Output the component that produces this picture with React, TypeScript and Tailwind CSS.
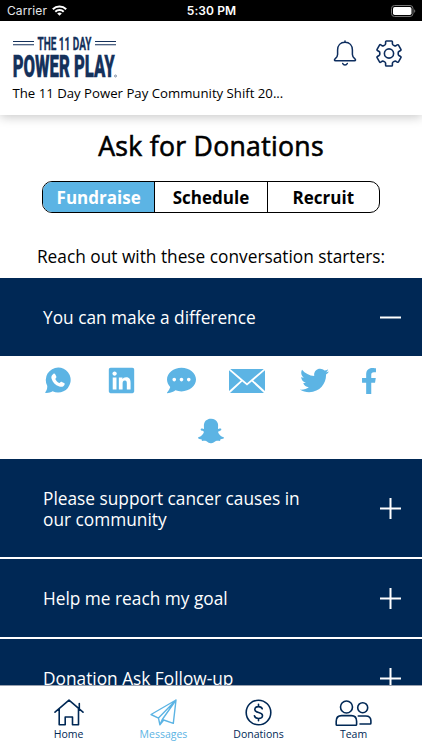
import React, { useState } from "react";
import { FaCommentDots, FaFacebookF, FaLinkedin, FaSnapchatGhost, FaTwitter } from "react-icons/fa";

const tabs = ["Fundraise", "Schedule", "Recruit"];

const starters = [
  { title: "You can make a difference", height: "h-[78px]" },
  { title: "Please support cancer causes in our community", height: "h-[98px]" },
  { title: "Help me reach my goal", height: "h-[78px]" },
  { title: "Donation Ask Follow-up", height: "h-[78px]" },
];

const StatusBar = () => (
  <div className="grid h-[21px] shrink-0 grid-cols-3 items-center bg-black pl-[7px] pr-[6px] font-['Inter',sans-serif] text-[12px] text-white">
    <div className="flex items-center gap-[5px]">
      <span className="text-[12px] leading-[20px] tracking-[0.1px] text-gray-200">Carrier</span>
      <svg width="15" height="11" viewBox="0 0 15 11" fill="none" stroke="white" strokeWidth="2">
        <path d="M.8 4.2a9.6 9.6 0 0 1 13.4 0M3.3 6.7a6 6 0 0 1 8.4 0" />
        <path d="M7.5 10.8 5.2 8.5a3.3 3.3 0 0 1 4.6 0z" fill="white" stroke="none" />
      </svg>
    </div>
    <span className="text-center font-semibold tracking-[0.1px]">5:30 PM</span>
    <svg className="justify-self-end" width="25" height="12" viewBox="0 0 25 12">
      <rect x=".5" y=".5" width="21.5" height="11" rx="3" fill="none" stroke="#777" />
      <rect x="2" y="2" width="18.5" height="8" rx="1.7" fill="white" />
      <path d="M23.2 4.2c1.4.5 1.4 3.1 0 3.6z" fill="#777" />
    </svg>
  </div>
);

const Logo = () => (
  <svg width="104" height="44" viewBox="0 0 104 44" fill="#15315b" className="overflow-visible font-['Roboto',sans-serif] font-bold">
    <path d="M0 6h21v1H0zM0 9.3h21v1H0zM82 6h21v1H82zM82 9.3h21v1H82z" />
    <text x="24.5" y="14.5" fontSize="17.5" textLength="54" lengthAdjust="spacingAndGlyphs" stroke="#15315b" strokeWidth=".3">THE 11 DAY</text>
    <text x="-0.3" y="42" fontSize="31.5" fontWeight="900" textLength="102" lengthAdjust="spacingAndGlyphs" stroke="#15315b" strokeWidth=".4">POWER PLAY</text>
    <circle cx="102.5" cy="41" r="1" fill="none" stroke="#15315b" strokeWidth=".5" />
  </svg>
);

const BellIcon = () => (
  <svg width="24" height="27" viewBox="0 0 24 27" fill="none" stroke="#0d2d5e" strokeWidth="1.5" strokeLinecap="round" strokeLinejoin="round">
    <path d="M12 1v1.2M12 2.2c-4.6 0-7.4 3.3-7.4 7.8v4.4c0 2-.8 3-2.5 4.4-1 .8-.8 2 .4 2h19c1.2 0 1.4-1.2.4-2-1.7-1.4-2.5-2.4-2.5-4.4V10c0-4.5-2.8-7.8-7.4-7.8z" />
    <path d="M9.7 23.5c.9 1.9 3.7 1.9 4.6 0" />
  </svg>
);

const GearIcon = () => (
  <svg width="26" height="27" viewBox="0 0 26 27" fill="none" stroke="#0d2d5e" strokeWidth="1.6" strokeLinejoin="round">
    <path d="M10.4 1h5.2c.5 0 .8.3.8.8v2c0 .6.400 1 .9 1.300l1.200.6c.5.300 1 .3 1.500 0l1.200-.8c.5-.3 1-.2 1.300.3l2.400 4.100c.3.500.1 1-.3 1.200l-1.700 1c-.5.300-.7.700-.7 1.200v1.600c0 .5.200.9.700 1.200l1.700 1c.4.200.6.700.3 1.200l-2.400 4.100c-.3.500-.8.600-1.300.3l-1.200-.8c-.5-.3-1-.3-1.500 0l-1.200.6c-.5.300-.9.700-.9 1.300v2c0 .5-.3.800-.8.800h-5.200c-.5 0-.8-.3-.8-.8v-2c0-.6-.4-1-.9-1.300l-1.200-.6c-.5-.3-1-.3-1.500 0l-1.200.8c-.5.300-1 .2-1.300-.3l-2.400-4.100c-.3-.5-.1-1 .3-1.200l1.700-1c.5-.3.700-.7.700-1.200v-1.600c0-.5-.2-.9-.7-1.200l-1.700-1c-.4-.2-.6-.7-.3-1.200l2.400-4.100c.3-.5.800-.6 1.300-.3l1.200.8c.5.300 1 .3 1.500 0l1.200-.6c.5-.3.900-.7.900-1.300v-2c0-.5.300-.8.800-.8z" />
    <circle cx="13" cy="13.5" r="4.6" />
  </svg>
);

const WhatsappIcon = () => (
  <svg className="mr-9" width="27" height="27" viewBox="0 0 27 27">
    <path fill="#5cb4e4" d="M14.200.5A12.500 12.500 0 0 0 3.200 18.800c.3 2.300-.6 5.200-2.400 7 3 .4 5.600-.2 7.800-1.600A12.500 12.500 0 1 0 14.200.5z" />
    <path fill="white" d="M9.3 6.9c.7-.6 1.5-.4 1.9.4l1.100 2.300c.3.7.1 1.200-1 2.300.8 2 2.200 3.300 4.300 4.100 1.100-1.200 1.600-1.400 2.300-1.100l2.100 1.100c.8.4.9 1.100.4 1.900-1 1.700-2.700 2.400-5.100 1.600-4.100-1.300-6.600-3.900-7.800-8-.5-2 .2-3.500 1.800-4.600z" />
  </svg>
);

const MailIcon = () => (
  <svg className="mr-[35px]" width="36" height="24" viewBox="0 0 36 24" fill="#5cb4e4">
    <path d="M1.2 0h33.600L18 14.200zM0 1.300 11.800 11.400 0 22zM36 1.300V22L24.200 11.400zM13.200 12.600 18 16.600l4.800-4L35 24H1z" />
  </svg>
);

const HomeIcon = () => (
  <svg width="30" height="27" viewBox="0 0 30 27" fill="none" stroke="currentColor" strokeWidth="1.6" strokeLinecap="round" strokeLinejoin="round">
    <path d="M1 13.200 15 1.200l14 12M5.200 10v15.800h6V18h7.300v7.800h6V10M25.300 9.500V4.600" />
  </svg>
);

const PlaneIcon = () => (
  <svg width="27" height="27" viewBox="0 0 27 27" fill="none" stroke="currentColor" strokeWidth="1.4" strokeLinejoin="round">
    <path d="M26 1 1 15.500l7.500 3.600L26 1 12.300 20.500l11 3.900zM8.500 19.100l1.400 6.700 3.800-4.800M9.900 25.800l2.400-5.300" />
  </svg>
);

const DollarIcon = () => (
  <svg width="27" height="27" viewBox="0 0 27 27" fill="none" stroke="currentColor" strokeWidth="1.6" strokeLinecap="round">
    <circle cx="13.5" cy="13.5" r="12.3" />
    <path d="M17.200 9.800c-.5-1.500-1.900-2.200-3.700-2.200-2.100 0-3.700 1-3.700 2.800 0 4.200 7.700 1.800 7.700 6.100 0 1.900-1.700 3-4 3s-3.700-1-4.100-2.700M13.500 5.200v2.400M13.500 19.500v2.300" />
  </svg>
);

const TeamIcon = () => (
  <svg width="37" height="26" viewBox="0 0 37 26" fill="none" stroke="currentColor" strokeWidth="1.6" strokeLinecap="round" strokeLinejoin="round">
    <circle cx="11.5" cy="7" r="6" />
    <circle cx="27.7" cy="7.7" r="5" />
    <path d="M6.700 15.600h9.600c3.400 0 5.300 2.300 5.300 5.600v3.200c0 .5-.3.800-.8.800H2c-.5 0-.8-.3-.8-.8v-3.200c0-3.300 2.100-5.600 5.500-5.600zM23.300 16h7.400c3.200 0 5.200 1.800 5.200 4.800v2.400c0 .5-.3.800-.8.800H25" />
  </svg>
);

const navItems = [
  { label: "Home", icon: <HomeIcon /> },
  { label: "Messages", icon: <PlaneIcon />, active: true },
  { label: "Donations", icon: <DollarIcon /> },
  { label: "Team", icon: <TeamIcon /> },
];

const App = () => {
  const [tab, setTab] = useState(0);
  const [open, setOpen] = useState(0);

  return (
    <div className="flex h-[750px] w-full flex-col overflow-hidden bg-white font-['Open_Sans','Noto_Sans',sans-serif] text-black">
      <StatusBar />

      <header className="z-10 flex h-[94px] shrink-0 justify-between bg-white pl-[12.5px] pr-5 pt-[14px] shadow-[0_2px_10px_rgba(0,0,0,0.22)]">
        <div>
          <Logo />
          <p className="mt-[5px] text-[13.2px] leading-[18px]">The 11 Day Power Pay Community Shift 20...</p>
        </div>
        <div className="flex items-start gap-[19px] pt-[5px]">
          <BellIcon />
          <GearIcon />
        </div>
      </header>

      <main className="flex min-h-0 flex-1 flex-col overflow-hidden">
        <h1 className="mt-[13px] shrink-0 text-center text-[26.6px] tracking-[0.3px] leading-9 [-webkit-text-stroke:0.6px_black]">Ask for Donations</h1>

        <div className="mx-auto mt-[17px] flex h-8 w-[338px] shrink-0 overflow-hidden rounded-[10px] border border-black">
          {tabs.map((name, i) => (
            <button
              key={name}
              onClick={() => setTab(i)}
              className={`flex-1 border-black pt-px text-[17px] font-bold ${i > 0 ? "border-l" : ""} ${i === tab ? "bg-[#5cb4e4] text-white" : ""}`}
            >
              {name}
            </button>
          ))}
        </div>

        <p className="mb-[9px] mt-8 shrink-0 text-center text-[17.3px] leading-6">Reach out with these conversation starters:</p>

        <div className="flex shrink-0 flex-col gap-[2px]">
          {starters.map((item, i) => (
            <section key={item.title}>
              <button
                onClick={() => setOpen(open === i ? -1 : i)}
                className={`flex w-full items-center justify-between bg-[#002855] pl-[43px] pr-[21px] pt-px text-left text-white ${item.height}`}
              >
                <span className="w-[280px] text-[17.3px] leading-[21px]">{item.title}</span>
                <svg width="21" height="21" viewBox="0 0 21 21" stroke="white" strokeWidth="2">
                  <path d={open === i ? "M0 10.500h21" : "M0 10.500h21M10.500 0v21"} />
                </svg>
              </button>
              {open === i && (
                <div className="h-[101px] pt-[11px] text-[#5cb4e4]">
                  <div className="flex h-[27px] items-center pl-11">
                    <WhatsappIcon />
                    <FaLinkedin size={29} className="mr-[31px]" />
                    <FaCommentDots size={29} className="mr-[33px]" />
                    <MailIcon />
                    <FaTwitter size={29} className="mr-[27px]" />
                    <FaFacebookF size={26} />
                  </div>
                  <div className="mt-6 flex justify-center">
                    <FaSnapchatGhost size={26} />
                  </div>
                </div>
              )}
            </section>
          ))}
        </div>
      </main>

      <nav className="flex h-[65px] shrink-0 border-t border-gray-400 bg-white px-[21px] pt-[13px]">
        {navItems.map(({ label, icon, active }) => (
          <a key={label} className={`flex flex-1 flex-col items-center ${active ? "text-[#5cb4e4]" : "text-[#002855]"}`}>
            <span className="flex h-[27px] items-center">{icon}</span>
            <span className="mt-px text-[10.5px] leading-[15px]">{label}</span>
          </a>
        ))}
      </nav>
    </div>
  );
};

export default App;
